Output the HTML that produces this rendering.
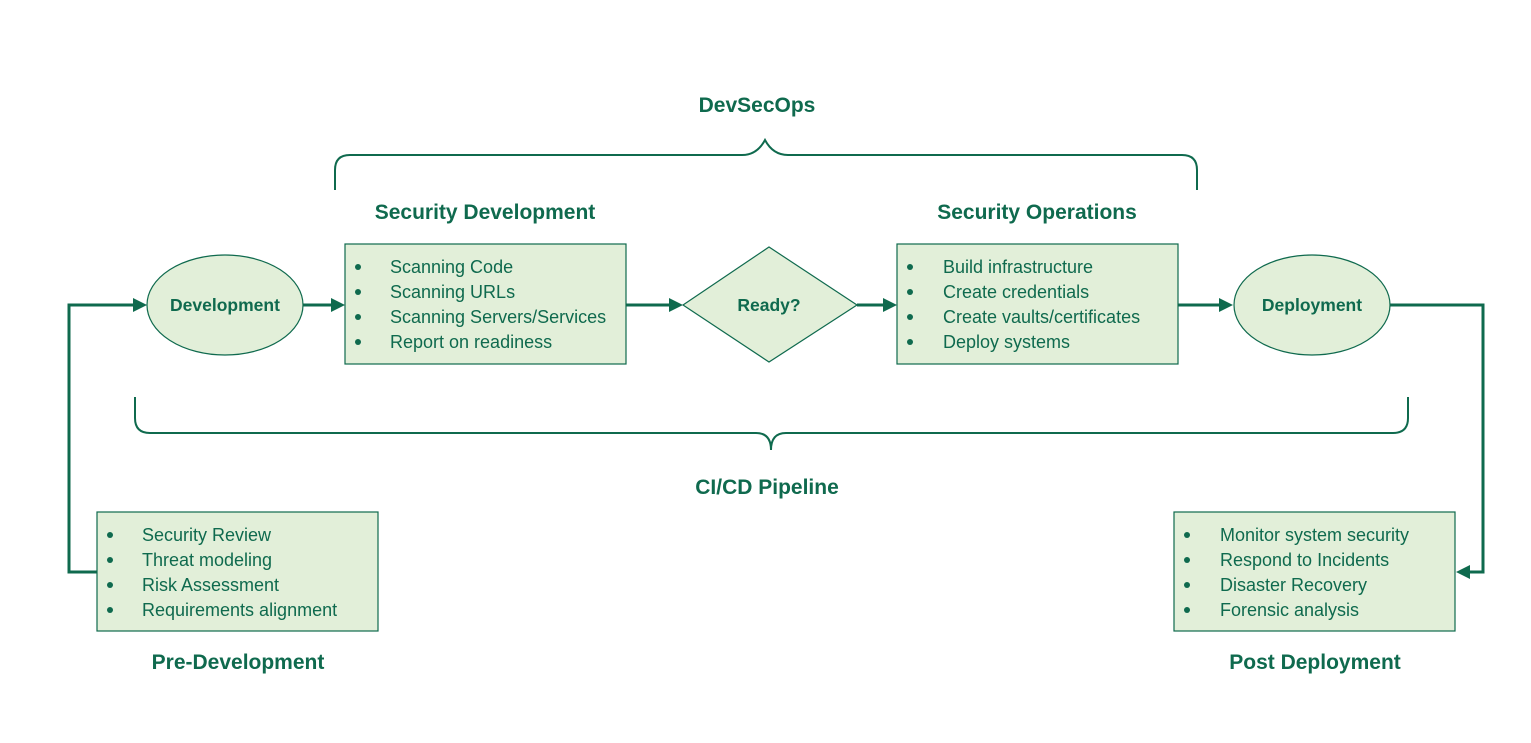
<!DOCTYPE html>
<html><head><style>
body{margin:0;background:#fff;}
svg{display:block;font-family:"Liberation Sans",sans-serif;}
.t{fill:#0f6a4e;font-weight:bold;font-size:21px;text-anchor:middle;}
.s{fill:#0f6a4e;font-weight:bold;font-size:17.5px;text-anchor:middle;}
.i{fill:#0f6a4e;font-size:18px;}
.b{fill:#e2efd9;stroke:#0f6a4e;stroke-width:1.2;}
.l{stroke:#0f6a4e;stroke-width:3;fill:none;}
.br{stroke:#0f6a4e;stroke-width:2;fill:none;}
.a{fill:#0f6a4e;}
</style></head><body>
<svg width="1531" height="743" viewBox="0 0 1531 743">
<text class="t" x="757" y="112">DevSecOps</text>
<path class="br" d="M335 190 V170 Q335 155 350 155 H742 Q757 155 765 140 Q773 155 788 155 H1182 Q1197 155 1197 170 V190"/>
<text class="t" x="485" y="219">Security Development</text>
<text class="t" x="1037" y="219">Security Operations</text>

<path class="l" d="M97 572 H69 V305 H135"/>
<polygon class="a" points="147,305 133,298 133,312"/>
<path class="l" d="M303 305 H333"/><polygon class="a" points="345,305 331,298 331,312"/>
<path class="l" d="M626 305 H671"/><polygon class="a" points="683,305 669,298 669,312"/>
<path class="l" d="M857 305 H885"/><polygon class="a" points="897,305 883,298 883,312"/>
<path class="l" d="M1178 305 H1221"/><polygon class="a" points="1233,305 1219,298 1219,312"/>
<path class="l" d="M1390 305 H1483 V572 H1468"/><polygon class="a" points="1456,572 1470,565 1470,579"/>

<ellipse class="b" cx="225" cy="305" rx="78" ry="50"/>
<text class="s" x="225" y="311">Development</text>
<ellipse class="b" cx="1312" cy="305" rx="78" ry="50"/>
<text class="s" x="1312" y="311">Deployment</text>
<polygon class="b" points="683,305 769,247 857,305 769,362"/>
<text class="s" x="769" y="311">Ready?</text>

<rect class="b" x="345" y="244" width="281" height="120"/>
<g class="i">
<circle cx="358" cy="267" r="3"/><text x="390" y="273">Scanning Code</text>
<circle cx="358" cy="292" r="3"/><text x="390" y="298">Scanning URLs</text>
<circle cx="358" cy="317" r="3"/><text x="390" y="323">Scanning Servers/Services</text>
<circle cx="358" cy="342" r="3"/><text x="390" y="348">Report on readiness</text>
</g>
<rect class="b" x="897" y="244" width="281" height="120"/>
<g class="i">
<circle cx="910" cy="267" r="3"/><text x="943" y="273">Build infrastructure</text>
<circle cx="910" cy="292" r="3"/><text x="943" y="298">Create credentials</text>
<circle cx="910" cy="317" r="3"/><text x="943" y="323">Create vaults/certificates</text>
<circle cx="910" cy="342" r="3"/><text x="943" y="348">Deploy systems</text>
</g>

<path class="br" d="M135 397 V418 Q135 433 150 433 H756 Q771 433 771 450 Q771 433 786 433 H1393 Q1408 433 1408 418 V397"/>
<text class="t" x="767" y="494">CI/CD Pipeline</text>

<rect class="b" x="97" y="512" width="281" height="119"/>
<g class="i">
<circle cx="110" cy="535" r="3"/><text x="142" y="541">Security Review</text>
<circle cx="110" cy="560" r="3"/><text x="142" y="566">Threat modeling</text>
<circle cx="110" cy="585" r="3"/><text x="142" y="591">Risk Assessment</text>
<circle cx="110" cy="610" r="3"/><text x="142" y="616">Requirements alignment</text>
</g>
<rect class="b" x="1174" y="512" width="281" height="119"/>
<g class="i">
<circle cx="1187" cy="535" r="3"/><text x="1220" y="541">Monitor system security</text>
<circle cx="1187" cy="560" r="3"/><text x="1220" y="566">Respond to Incidents</text>
<circle cx="1187" cy="585" r="3"/><text x="1220" y="591">Disaster Recovery</text>
<circle cx="1187" cy="610" r="3"/><text x="1220" y="616">Forensic analysis</text>
</g>
<text class="t" x="238" y="669">Pre-Development</text>
<text class="t" x="1315" y="669">Post Deployment</text>
</svg>
</body></html>
